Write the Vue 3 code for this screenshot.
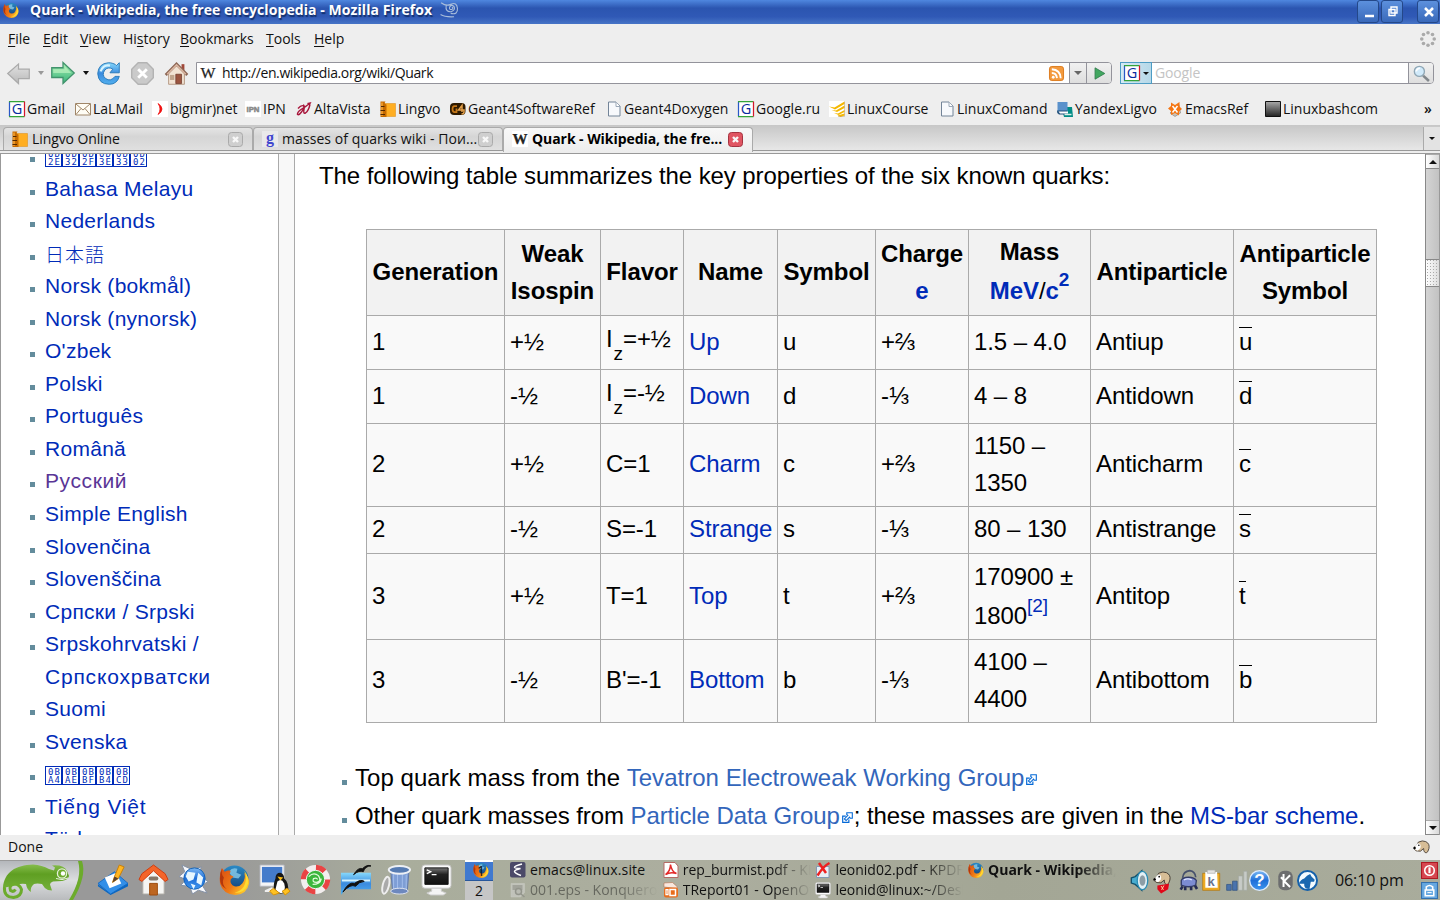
<script setup>
import { h } from 'vue'

const art = {
  firefox: `<circle cx="16" cy="16" r="14.5" fill="url(#sea)"/><path d="M10 8q4-5 9-3l-1 4 5 2-3 4-6-1z" fill="#8fd0ee" opacity=".75"/><path d="M3 4 6 8q3-2 6-1l-1 4 4 2-3 3q-1 5 4 7 5 1 8-3 4-5 2-11 6 5 5 11-2 11-14 12Q4 31 1 20 0 11 3 4z" fill="url(#fox)"/><path d="M26 7q5 6 4 13-3 10-14 10 9-3 11-10 2-7-1-13z" fill="#ffdc32"/><path d="M3 5q-1 6 2 9-3 7 3 12Q1 23 1 15q0-6 2-10z" fill="#b3370c"/>`,
  google: `<path d="M1 1h30v30H1z" fill="#fff"/><path d="M1 31V1" stroke="#2857c7" stroke-width="2.5"/><path d="M0 1h31M0 31h31" stroke="#35a43a" stroke-width="2.5"/><path d="M31 1v30" stroke="#d3182c" stroke-width="2.5"/><text x="16" y="26.500" text-anchor="middle" font-family="Open Sans" font-size="29" fill="#0a2ca0">G</text>`,
  gsmall: `<path d="M0 0h32v32H0z" fill="#e9e9ea"/><text x="16" y="23" text-anchor="middle" font-family="Liberation Serif" font-weight="bold" font-size="32" fill="#4146ce">g</text>`,
  wiki: `<path d="M0 0h32v32H0z" fill="#fff"/><text x="1" y="26" font-family="Liberation Serif" font-size="30" fill="#222" stroke="#222" stroke-width=".5" textLength="30" lengthAdjust="spacingAndGlyphs">W</text>`,
  mail: `<path d="M1 5h30v23H1z" fill="#fffdf5" stroke="#a08668" stroke-width="2"/><path d="m2 6 14 12L30 6M2 27l10-12m18 12L20 15" fill="none" stroke="#a08668" stroke-width="2"/>`,
  bigmir: `<path d="M0 0h32v32H0z" fill="#fff"/><path d="M12 5q8 5 8 11t-8 11q4-5 4-11t-4-11z" fill="#f01010" stroke="#f01010" stroke-width="1.5"/>`,
  ipn: `<path d="M0 0h32v32H0z" fill="#fff"/><text x="3" y="21" font-family="Liberation Sans" font-weight="bold" font-size="15" fill="#888" stroke="#888" textLength="26" lengthAdjust="spacingAndGlyphs">iPN</text>`,
  altavista: `<path d="M4 15q7-8 11-5 3 3-4 12-5 7-8 5-1-4 7-10 11-7 16-11m-12 2q4 1 2 9-2 9 3 7 6-4 9-17" fill="none" stroke="#a8163b" stroke-width="2.8"/><path d="m22 4 9-2-4 8" fill="#a8163b"/>`,
  book: `<path d="M7 5h24v26H7z" fill="#ffae22" stroke="#dd8a10"/><path d="M1 1h10q-4 4 2 6v25H1z" fill="#c66b00"/><path d="M4 3v27" stroke="#f6a636" stroke-width="3"/><path d="M2 11h7M1 19h9M1 27h9" stroke="#522800" stroke-width="2"/>`,
  geant: `<rect y="4" width="31" height="24" rx="8" fill="#2e1a00"/><path d="M14 10H9q-4 0-4 6t4 6h4v-7" fill="none" stroke="#c57718" stroke-width="3.5"/><path d="M24 22V9l-7 9h11v4q0 4-5 4" fill="none" stroke="#e3a04a" stroke-width="3"/>`,
  page: `<path d="M5 2h15l8 8v20H5z" fill="#f7f9fc" stroke="#738498" stroke-width="2"/><path d="M20 2v9h8" fill="#fff" stroke="#9aa7b7" stroke-width="2"/>`,
  fan: `<path d="M0 0h32v32H0z" fill="#fff"/><path d="m0 11 11 2L31 1v5L12 17zm5 7 9 1L31 9v5l-15 8zm5 6 8 1 13-7v4l-12 6zm7 5 14-4v4l-8 3z" fill="#f5b800"/><path d="M31 1v30H18" stroke="#b39764" fill="none"/>`,
  books: `<path d="M9 12h21l2 20H14z" fill="#008b84"/><path d="M1 2h20v20H1z" fill="#5a91cb"/><path d="M0 19h20v8H4q-5-3-4-8z" fill="#22517c"/><path d="M3 21h19v4H6z" fill="#fff"/><path d="M15 27h14" stroke="#d8efe8" stroke-width="3"/>`,
  emacsref: `<path d="M24 7 27 24 16 31 6 24z" fill="#c9c3b9" stroke="#706b65"/><path d="m8 3 8 5 9-6v9l5 5-6 5v8l-8-5-8 4v-8l-6-5 6-5z" fill="#f57613"/><path d="m11 10 10 13m0-13L11 23" stroke="#fff" stroke-width="3"/>`,
  black: `<path d="M1 1h30v30H1z" fill="url(#slate)" stroke="#111" stroke-width="2"/>`,
  back: `<path d="M1 16 16 3v7h15v13H16v7z" fill="url(#greyg)" stroke="#aaa" stroke-width="1.7"/>`,
  forward: `<path d="M31 16 16 2v7H1v13h15v8z" fill="url(#greeng)" stroke="#41936c" stroke-width="1.7"/><path d="m18 7 9 9H3v-5h15z" fill="#c7f7c6" opacity=".6"/>`,
  reload: `<path d="M22 2q4 1 5 3l4-4v14H18l4-5Q16 6 11 11q-5 7 1 12 7 5 13-3h6q-3 11-14 11Q2 31 1 16 2 2 16 1q3 0 6 1z" fill="url(#blueg)" stroke="#2879b8" stroke-width="1.3"/><path d="M5 13Q9 3 18 5" fill="none" stroke="#d6f4ff" stroke-width="3"/>`,
  stop: `<path d="m10 1h12l9 9v12l-9 9H10l-9-9V10z" fill="#cacaca" stroke="#b3b3b3" stroke-width="2"/><path d="m10 10 12 12m0-12L10 22" stroke="#fff" stroke-width="4"/>`,
  home: `<path d="M23 3h4v9h-4z" fill="#a1493a"/><path d="m5 15 11-12 11 12v16H5z" fill="#f2e3d3" stroke="#a28067"/><path d="M1 18 16 3l15 15" fill="none" stroke="#8b6553" stroke-width="4"/><path d="M3 17 16 4l13 13" fill="none" stroke="#dcb7a2" stroke-width="2"/><path d="M15 17h8v13h-8z" fill="#9b5540" stroke="#6d3627"/><path d="M7 18h6v7H7z" fill="#c0a58c"/>`,
  rss: `<rect x="1" y="1" width="30" height="30" rx="5" fill="#f39a3e" stroke="#dc7a1a" stroke-width="2"/><circle cx="9" cy="24" r="3" fill="#fff"/><path d="M6 15q10 0 11 11M6 7q18 1 19 19" fill="none" stroke="#fff" stroke-width="4"/>`,
  go: `<path d="M5 2 29 16 5 30z" fill="#42a760" stroke="#2d7a4a" stroke-width="2"/>`,
  search: `<path d="m19 20 11 10" stroke="#82878b" stroke-width="5"/><circle cx="12" cy="12" r="9.5" fill="#d1eafa" stroke="#8fa6b4" stroke-width="2.5"/><path d="M6 12q1-6 7-6" stroke="#fff" stroke-width="3" fill="none"/>`,
  throbber: `<g fill="#aaa"><circle cx="16" cy="3.5" r="3.6"/><circle cx="25" cy="7" r="3.6"/><circle cx="28.5" cy="16" r="3.6"/><circle cx="25" cy="25" r="3.6"/><circle cx="16" cy="28.5" r="3.6"/><circle cx="7" cy="25" r="3.6"/><circle cx="3.5" cy="16" r="3.6"/><circle cx="7" cy="7" r="3.6"/></g>`,
  swirl: `<path d="M2 3q9 7 17 3Q30 1 31 13t-12 9M11 8q-2 12 9 11 8-3 5-9-5-5-8 1-1 5 4 4 4-3 0-4M1 24q8 5 24 4" fill="none" stroke="#a8bddb" stroke-width="2"/>`,
  ext: `<path d="M11 12H2v18h18v-8" fill="#fff" stroke="#0569d6" stroke-width="3.4"/><path d="M14 2h16v16h-6l-2-3-10 10-5-5L17 10l-3-2z" fill="#fff" stroke="#0569d6" stroke-width="3.2"/>`,
  note: `<path d="m1 20 17-12 14 12-18 11z" fill="#328fe8" stroke="#176bc5"/><path d="m1 21 13 10 18-11v3L14 32 1 23z" fill="#0867c4"/><path d="m8 14 12-5 5 11-12 5z" fill="#fff"/><path d="m16 19 2-6 5-12 5 2-6 12z" fill="#ffb522" stroke="#c77f08"/><path d="m16 19 2-6 4 2z" fill="#5a4130"/>`,
  house: `<path d="M5 15 16 4l11 11v16H5z" fill="#f5f5f3" stroke="#b0aca6"/><path d="M1 16 4 10 16 1l12 9 3 6-3 2L16 7 4 18z" fill="#f4652a" stroke="#ce3c0e"/><path d="M12 20h8v12h-8z" fill="#bd6621" stroke="#9d4a0c"/><rect x="11" y="13" width="10" height="4" rx="2" fill="#88786a"/>`,
  konq: `<g fill="#f7f8fb" stroke="#8390a4"><path d="M4 1 15 6l9-3-2 9 9 6-6 4 5 8-9-3-6 4-3-8-9-1 5-6-7-3 6-5z"/></g><circle cx="17" cy="15" r="11" fill="url(#globe)" stroke="#1562b5"/><path d="m10 8 8 1-2 7-5 2-3-5zm11 1 5 5-2 8-5-3 1-6zM13 20l5 2-2 4z" fill="#e7f7ff"/>`,
  linux: `<path d="M1 1h25v22H1z" fill="#f4f5f7" stroke="#b0b3b9"/><path d="M3 3h21v16H3z" fill="#447bcb"/><path d="m6 27 7-3 6 3-4 2H6z" fill="#eee"/><path d="M17 15q0-6 5-6 4 1 4 6 5 4 4 14-8 3-14 0-2-7 1-14z" fill="#161616"/><path d="M19 18q4-4 7 2 2 7-2 10-4 0-7-4z" fill="#fff"/><path d="m19 13 6 1-3 3z" fill="#ffbf16"/><path d="m15 25 6 5-6 2-4-4zm14 0 3 3-5 4-3-4z" fill="#ffc222" stroke="#d69103"/>`,
  ring: `<circle cx="16" cy="16" r="15" fill="#f2eeee"/><circle cx="16" cy="16" r="12.2" fill="none" stroke="#e94444" stroke-width="6" stroke-dasharray="9.6 9.6"/><circle cx="16" cy="16" r="9.5" fill="#3cb63c" stroke="#f5f5f5"/><path d="M9 13q5-5 10-1 4 6-2 7-5 0-3-4 4-1 4 1m4-1q-1 6-9 6" stroke="#e3fadb" stroke-width="1.3" fill="none"/>`,
  office: `<path d="M1 9h31v17H6l-5 6z" fill="url(#blueg)"/><path d="M2 17h29" stroke="#d5f3ff" stroke-width="2"/><path d="M3 29q6-11 12-9 7-5 10-2-5 0-9 5-5-3-13 6zM14 11q5-8 9-6 5-5 9-3-6 0-8 6-4-2-10 3z" fill="#111" stroke="#111"/>`,
  trash: `<path d="M10 6h19l-2 23H12z" fill="#7e9ed5" stroke="#6279a6"/><path d="M13 9v19m4-18v19m5-19v19m4-18v17" stroke="#a3beeb"/><ellipse cx="19" cy="6" rx="11" ry="4" fill="#567bb2" stroke="#edf0f5" stroke-width="2"/><ellipse cx="19" cy="28" rx="9" ry="3" fill="#6d88be" stroke="#dfe4ef"/><ellipse cx="5" cy="22" rx="3.2" ry="9" transform="rotate(14 5 22)" fill="#aaa" stroke="#eee" stroke-width="2"/>`,
  terminal: `<rect x="1" y="1" width="30" height="24" rx="3" fill="#fbfbfb" stroke="#c4c4c4"/><path d="M4 4h24v17H4z" fill="url(#ink)" stroke="#111"/><path d="m6 6 4 2-4 2m5 1h5" fill="none" stroke="#fff" stroke-width="1.4"/><path d="M11 25h10v3l5 2-3 2H10l-4-2 5-2z" fill="#f4f4f4" stroke="#ccc"/>`,
  emacs: `<rect width="31" height="31" rx="4" fill="#4b4968"/><path d="M24 4Q8 8 9 11q1 2 12 2-12 3-12 6 0 3 13 8" fill="none" stroke="#fff" stroke-width="3"/>`,
  image: `<path d="M2 3h27v18l-8 9H2z" fill="#ddd" stroke="#eee"/><path d="M5 6h20v10H5z" fill="#999"/><circle cx="17" cy="19" r="6" fill="#ccc" stroke="#777" stroke-width="3"/><path d="m22 24 7 6" stroke="#777" stroke-width="3"/>`,
  pdf: `<path d="M2 1h22l6 7v23H2z" fill="#fff" stroke="#b56a64" stroke-width="2"/><path d="M5 25q10-7 10-20 2 14 12 18Q15 19 5 25z" fill="none" stroke="#e32929" stroke-width="3"/>`,
  impress: `<path d="M2 10V2l17-1 9 8v4z" fill="#f8e8df" stroke="#b2633c"/><rect x="2" y="11" width="28" height="20" rx="4" fill="#e86d1d"/><path d="M10 15H6v10h4z" fill="none" stroke="#fff" stroke-width="2.5"/><path d="M14 15h11v12H14z" fill="none" stroke="#fff" stroke-width="3"/>`,
  kpdf: `<path d="M3 9h25v22H3z" fill="#e8eef5" stroke="#8399b4" stroke-width="2"/><path d="m8 2 14 20M29 2Q17 8 5 27" stroke="#ee2020" stroke-width="5" fill="none"/>`,
  speaker: `<path d="M2 12 8 10 18 1v30L8 22l-6-2z" fill="#48acd0" stroke="#11506c" stroke-width="2"/><ellipse cx="19" cy="16" rx="8" ry="14" fill="#e4f0f5" stroke="#2b8db4" stroke-width="2"/><ellipse cx="19" cy="16" rx="4.5" ry="8" fill="#8c9da6"/>`,
  dog: `<path d="M10 4q8-4 14-1 8 4 6 13-2 8-5 8-5 0-5-8l-6 5q-9 1-12-4-1-5 5-6z" fill="#d7bd96" stroke="#3d352e" stroke-width="1.6"/><path d="M9 6q7 0 5 9l-5 5-7-3 2-5z" fill="#fff"/><circle cx="11" cy="10" r="1.5"/><circle cx="3" cy="15" r="2.300"/>`,
  redpet: `<path d="m5 14 25-4-2 12-15 9-8-9z" fill="#e10719"/><path d="m13 15 5 8m1-9-5 9" stroke="#ffd9a0" stroke-width="2"/>`,
  lock: `<path d="M7 12Q8 2 18 1q8 1 9 10" fill="none" stroke="#46516c" stroke-width="2.5"/><path d="M5 16q2-5 11-5t12 5l-1 7q-11 5-22 0z" fill="#7c8cd2" stroke="#323b67" stroke-width="2"/><path d="m7 25-3 5m7-4v5m9-5v5m6-7 3 5" stroke="#252c54" stroke-width="4"/><path d="M9 15q6-3 12 0" stroke="#dfe6ff" stroke-width="2" fill="none"/>`,
  clip: `<path d="M1 5h26v26H1z" fill="#edaa22" stroke="#ad7411"/><path d="M5 3h18l1 24H5z" fill="#fff"/><path d="M8 0h12v5H8z" fill="#e4e4e4" stroke="#aaa"/><text x="14" y="24" text-anchor="middle" font-family="Liberation Mono" font-weight="bold" font-size="20" fill="#68718b">k</text>`,
  bars: `<path d="M1 22h7v9H1zm9-5h7v14h-7z" fill="#4a73ad" stroke="#284c81"/><path d="M19 9h6v22h-6zm8-7h5v29h-5z" fill="#c7cbc7" stroke="#a4a9a4"/>`,
  help: `<circle cx="16" cy="16" r="15" fill="url(#globe)" stroke="#dfecfc" stroke-width="2"/><text x="16" y="25" text-anchor="middle" font-family="Liberation Sans" font-weight="bold" font-size="26" fill="#fff">?</text>`,
  k: `<rect x="5" y="1" width="22" height="30" rx="9" fill="#6c6d6f"/><path d="M13 6v20m10-18-9 9 9 9M9 11l5 5" stroke="#fff" stroke-width="3" fill="none"/>`,
  wolf: `<circle cx="16" cy="16" r="14.5" fill="#f4fbff" stroke="#1561ab" stroke-width="3"/><path d="M3 21q2-6 8-8 4-5 9-7l2 4 5 5-1 3-5 0-2 11q-9 0-8-8-3 0-8 0z" fill="#1967b0"/>`,
  power: `<path d="M1 1h30v30H1z" fill="#d64750" stroke="#ad1923" stroke-width="2"/><circle cx="16" cy="16" r="9" fill="none" stroke="#fff" stroke-width="3"/><path d="M16 10v11" stroke="#fff" stroke-width="4"/>`,
  secure: `<path d="M1 1h30v30H1z" fill="#65a7df" stroke="#3470ad" stroke-width="2"/><path d="M10 14V9q6-5 12 0v5M8 15h16v11H8z" fill="none" stroke="#fff" stroke-width="3"/><path d="M12 20h8" stroke="#fff" stroke-width="2"/>`,
}

const Icon = (props) =>
  h('svg', { viewBox: '0 0 32 32', width: props.s || 16, height: props.s || 16, 'aria-hidden': true, innerHTML: art[props.n] })
Icon.props = ['n', 's']

const menus = [['F', 'ile', 35], ['E', 'dit', 37], ['V', 'iew', 43], ['Hi', 'story', 57], ['B', 'ookmarks', 86], ['T', 'ools', 48], ['H', 'elp', 40]]

const bookmarks = [
  ['google', 'Gmail', 66], ['mail', 'LaLMail', 77], ['bigmir', 'bigmir)net', 93], ['ipn', 'IPN', 51],
  ['altavista', 'AltaVista', 84], ['book', 'Lingvo', 70], ['geant', 'Geant4SoftwareRef', 156],
  ['page', 'Geant4Doxygen', 132], ['google', 'Google.ru', 91], ['fan', 'LinuxCourse', 110],
  ['page', 'LinuxComand', 118], ['books', 'YandexLigvo', 110], ['emacsref', 'EmacsRef', 98], ['black', 'Linuxbashcom', 159],
]

const tabs = [
  { icon: 'book', text: 'Lingvo Online' },
  { icon: 'gsmall', text: 'masses of quarks wiki - Пои...' },
  { icon: 'wiki', text: 'Quark - Wikipedia, the fre...', active: true },
]

const languages = [
  { codes: ['0D2E', '0D32', '0D2F', '0D3E', '0D33', '0D02'] },
  { text: 'Bahasa Melayu' }, { text: 'Nederlands' }, { text: '日本語', kind: 'cjk' }, { text: 'Norsk (bokmål)' },
  { text: 'Norsk (nynorsk)' }, { text: "O'zbek" }, { text: 'Polski' }, { text: 'Português' }, { text: 'Română' },
  { text: 'Русский', kind: 'visited' }, { text: 'Simple English' }, { text: 'Slovenčina' }, { text: 'Slovenščina' },
  { text: 'Српски / Srpski' }, { text: 'Srpskohrvatski / ', wide: 'Српскохрватски' }, { text: 'Suomi' }, { text: 'Svenska' },
  { codes: ['0BA4', '0BAE', '0BBF', '0BB4', '0BCD'] },
  { wide: 'Tiếng Việt' }, { text: 'Türkçe' },
]

const columnWidths = [138, 96, 83, 94, 98, 93, 122, 143, 143]
const rows = [
  { h: 54, gen: 1, spin: '+½', iz: '+½', name: 'Up', sym: 'u', charge: '+⅔', mass: '1.5 – 4.0', anti: 'Antiup' },
  { h: 54, gen: 1, spin: '-½', iz: '-½', name: 'Down', sym: 'd', charge: '-⅓', mass: '4 – 8', anti: 'Antidown' },
  { h: 83, gen: 2, spin: '+½', flavor: 'C=1', name: 'Charm', sym: 'c', charge: '+⅔', mass: '1150 – 1350', anti: 'Anticharm' },
  { h: 47, gen: 2, spin: '-½', flavor: 'S=-1', name: 'Strange', sym: 's', charge: '-⅓', mass: '80 – 130', anti: 'Antistrange' },
  { h: 86, gen: 3, spin: '+½', flavor: 'T=1', name: 'Top', sym: 't', charge: '+⅔', mass: '170900 ± 1800', cite: '[2]', anti: 'Antitop' },
  { h: 83, gen: 3, spin: '-½', flavor: "B'=-1", name: 'Bottom', sym: 'b', charge: '-⅓', mass: '4100 – 4400', anti: 'Antibottom' },
]

const launchers = ['note', 'house', 'konq', 'firefox', 'linux', 'ring', 'office', 'trash', 'terminal']
const tasks = [
  ['emacs', 'emacs@linux.site', 'short'], ['pdf', 'rep_burmist.pdf - KPDF'], ['kpdf', 'leonid02.pdf - KPDF'], ['firefox', 'Quark - Wikipedia, the free', 'current'],
  ['image', '001.eps - Konqueror', 'dim'], ['impress', 'TReport01 - OpenOffice'], ['terminal', 'leonid@linux:~/Desktop'],
]
const tray = [['speaker', 23], ['dog', 25], ['lock', 24], ['clip', 24], ['bars', 23], ['help', 26], ['k', 22], ['wolf', 24]]
</script>

<template>
  <div class="screen">
    <svg class="defs" width="0" height="0">
      <defs>
        <linearGradient id="sea" x2="0" y2="1"><stop stop-color="#2b8ac6" /><stop offset="1" stop-color="#12386f" /></linearGradient>
        <linearGradient id="fox" x2="1" y2=".6"><stop stop-color="#d84c12" /><stop offset=".6" stop-color="#ef7a16" /><stop offset="1" stop-color="#ffc629" /></linearGradient>
        <linearGradient id="ink" x2="0" y2="1"><stop stop-color="#777" /><stop offset=".4" stop-color="#222" /><stop offset="1" stop-color="#111" /></linearGradient>
        <linearGradient id="slate" x2="0" y2="1"><stop stop-color="#aaa" /><stop offset="1" stop-color="#222" /></linearGradient>
        <linearGradient id="greyg" x2="0" y2="1"><stop stop-color="#e2e2e2" /><stop offset="1" stop-color="#b9b9b9" /></linearGradient>
        <linearGradient id="panelg" x2="0" y2="1"><stop stop-color="#b4b7bb" /><stop offset=".5" stop-color="#dcdee0" /><stop offset="1" stop-color="#b9bbbd" /></linearGradient>
        <linearGradient id="greeng" x2="0" y2="1"><stop stop-color="#a9edb2" /><stop offset="1" stop-color="#37b47a" /></linearGradient>
        <linearGradient id="blueg" x2="0" y2="1"><stop stop-color="#86d8fb" /><stop offset=".5" stop-color="#3b8bdf" /><stop offset="1" stop-color="#52b0ee" /></linearGradient>
        <linearGradient id="globe" x2="0" y2="1"><stop stop-color="#7db9f5" /><stop offset=".5" stop-color="#1f6fd8" /><stop offset="1" stop-color="#3f95ee" /></linearGradient>
        <linearGradient id="skin" x2="0" y2="1"><stop stop-color="#86bd4c" /><stop offset=".35" stop-color="#5f9f22" /><stop offset="1" stop-color="#76b23c" /></linearGradient>
      </defs>
    </svg>

    <header class="title">
      <Icon n="firefox" /><b>Quark - Wikipedia, the free encyclopedia - Mozilla Firefox</b><Icon n="swirl" s="18" />
      <span class="grow"></span>
      <i class="win"><svg width="20" height="20"><path d="M6 14h9" stroke="#fff" stroke-width="2.5" /></svg></i>
      <i class="win"><svg width="20" height="20"><path d="M8 5h6v6H8zM6 7.500h6v6H6z" fill="none" stroke="#fff" stroke-width="1.4" /></svg></i>
      <i class="win last"><svg width="20" height="20"><path d="m6 6 8 8m0-8-8 8" stroke="#fff" stroke-width="2.5" /></svg></i>
    </header>

    <nav class="menu">
      <span v-for="m in menus" :key="m[1]" :style="{ width: m[2] + 'px' }"><template v-if="m[0] === 'Hi'">Hi<u>s</u>tory</template><template v-else><u>{{ m[0] }}</u>{{ m[1] }}</template></span>
      <Icon class="throbber" n="throbber" s="16" />
    </nav>

    <div class="toolbar">
      <Icon n="back" s="23" /><i class="caret pale"></i><Icon n="forward" s="24" /><i class="caret"></i>
      <Icon class="reload" n="reload" s="23" /><Icon class="stop" n="stop" s="23" /><Icon class="home" n="home" s="23" />
      <div class="url">
        <Icon n="wiki" /><span>http://en.wikipedia.org/wiki/Quark</span><Icon n="rss" s="15" />
        <i class="drop"><i class="tri"></i></i><i class="go"><Icon n="go" s="13" /></i>
      </div>
      <div class="find">
        <i class="engine"><Icon n="google" /><i class="tri dark"></i></i><span>Google</span><i class="lens"><Icon n="search" s="17" /></i>
      </div>
    </div>

    <div class="bookmarks">
      <span v-for="b in bookmarks" :key="b[1]" :style="{ width: b[2] + 'px' }"><Icon :n="b[0]" />{{ b[1] }}</span><b>»</b>
    </div>

    <div class="tabs">
      <div v-for="t in tabs" :key="t.text" class="tab" :class="{ active: t.active }">
        <Icon :n="t.icon" /><span>{{ t.text }}</span>
        <svg class="close" width="15" height="15"><rect x=".5" y=".5" width="14" height="14" rx="3" /><path d="m5 5 5 5m0-5-5 5" /></svg>
      </div>
      <i class="list"><i class="tri dark"></i></i>
    </div>

    <main class="page">
      <aside>
        <ul>
          <li v-for="(l, i) in languages" :key="i" :class="[l.kind, { missing: l.codes }]">
            <template v-if="l.codes"><span v-for="c in l.codes" :key="c" class="tofu">{{ c.slice(0, 2) }}<br />{{ c.slice(2) }}</span></template>
            <template v-else>{{ l.text }}<span v-if="l.wide" class="wide">{{ l.wide }}</span></template>
          </li>
        </ul>
      </aside>
      <article>
        <p>The following table summarizes the key properties of the six known quarks:</p>
        <table>
          <colgroup><col v-for="(w, i) in columnWidths" :key="i" :style="{ width: w + 'px' }" /></colgroup>
          <thead>
            <tr>
              <th>Generation</th><th>Weak<br />Isospin</th><th>Flavor</th><th>Name</th><th>Symbol</th><th>Charge<br /><a>e</a></th>
              <th class="tall">Mass<br /><a>MeV</a><span class="slash">/</span><a>c<sup>2</sup></a></th><th>Antiparticle</th><th>Antiparticle<br />Symbol</th>
            </tr>
          </thead>
          <tbody>
            <tr v-for="r in rows" :key="r.name" :style="{ height: r.h + 'px' }">
              <td>{{ r.gen }}</td><td>{{ r.spin }}</td>
              <td v-if="r.iz" class="iz">I<sub>z</sub>={{ r.iz }}</td><td v-else>{{ r.flavor }}</td>
              <td><a>{{ r.name }}</a></td><td>{{ r.sym }}</td><td>{{ r.charge }}</td>
              <td :class="{ tall: r.cite }">{{ r.mass }}<sup v-if="r.cite"><a>{{ r.cite }}</a></sup></td>
              <td>{{ r.anti }}</td><td><span class="bar">{{ r.sym }}</span></td>
            </tr>
          </tbody>
        </table>
        <ul>
          <li class="loose">Top quark mass from the <a class="out">Tevatron Electroweak Working Group</a><Icon class="ext" n="ext" s="11" /></li>
          <li>Other quark masses from <a class="out">Particle Data Group</a><Icon class="ext" n="ext" s="11" />; these masses are given in the <a>MS-bar scheme</a>.</li>
        </ul>
      </article>
      <div class="scroll"><i class="arrow"><i class="tri dark up"></i></i><i class="thumb"></i><span class="grow"></span><i class="arrow"><i class="tri dark"></i></i></div>
    </main>

    <div class="status"><span>Done</span><Icon n="dog" s="17" /></div>

    <footer class="panel">
      <div class="start">
        <svg width="84" height="40" viewBox="0 0 84 40">
          <path d="M0 1h79q4 16-9 39H0z" fill="url(#panelg)" /><path d="M78 1q5 16-9 39h4q14-24 9-39z" fill="#6cab2c" />
          <path d="M3 28C4 12 16 5 33 4.500q9 .5 16 4.500l5 1.500 1-3-3-2q12-1 15 5.500l2 5q-1 4-7 5l-9 .5q-3 1-3 3l2 6-4-.5q-4-2-6-6-5-1-8 0-4 3-3 8-4-2-5-8-5-1-9 1z" fill="url(#skin)" />
          <path d="M4.500 27q-1 10 9 10.500 8-1 8-8-2-6-8-5.500-5 2-3 6.500 3 2 5-1" fill="none" stroke="#6cab2c" stroke-width="3" />
          <circle cx="62" cy="13.500" r="4.600" fill="#6cab2c" stroke="#e4efda" stroke-width="1.300" /><circle cx="63" cy="13.500" r="2.200" fill="#fff" />
          <path d="M56 18.500q6 2.500 12-.5" stroke="#e4efda" fill="none" />
        </svg>
      </div>
      <div class="launch"><Icon v-for="l in launchers" :key="l" :n="l" s="31" /></div>
      <div class="pager"><span class="on"><Icon n="firefox" /><b>1</b></span><span>2</span></div>
      <div class="tasks"><span v-for="t in tasks" :key="t[1]" :class="t[2]"><Icon :n="t[0]" /><em>{{ t[1] }}</em></span></div>
      <div class="tray"><span v-for="t in tray" :key="t[0]" :style="{ width: t[1] + 'px' }"><Icon :n="t[0]" :s="t[0] === 'dog' ? 18 : 21" /><Icon v-if="t[0] === 'dog'" class="pet" n="redpet" s="15" /></span></div>
      <time>06:10 pm</time>
      <div class="session"><Icon n="power" s="17" /><Icon n="secure" s="17" /></div>
    </footer>
  </div>
</template>

<style>
body { margin: 0; overflow: hidden; }
</style>

<style scoped>
.screen { width: 1440px; height: 900px; overflow: hidden; display: flex; flex-direction: column; background: #eee; color: #111; font: 14px/20px "Open Sans", "Noto Sans", sans-serif; white-space: nowrap; }
.screen * { box-sizing: border-box; }
.defs { position: absolute; }
i, em { font-style: normal; }
svg { display: block; flex: none; overflow: visible; }
.grow { flex: 1; }
.tri { width: 0; height: 0; border: 4px solid transparent; border-top: 4px solid #666; border-bottom: 0; }
.tri.dark { border-top-color: #111; }
.tri.up { transform: rotate(180deg); }

.title { height: 24px; flex: none; display: flex; align-items: center; padding: 0 1px 4px 3px; background: linear-gradient(#4f87df, #2b55b0 34%, #3059b6 70%, #4674c6); color: #fff; }
.title b { margin-left: 11px; width: 410px; text-shadow: 1px 2px 1px #14306c; letter-spacing: .08px; }
.win { width: 22px; height: 23px; margin: 3px 2px 0 0; padding: 1px; border: 1px solid #244889; border-radius: 3px; background: linear-gradient(#5c90dd, #3969ba); }
.win.last { margin: 3px 0 0 12px; }

.menu { height: 30px; flex: none; display: flex; align-items: center; padding-left: 8px; }
.menu u { text-underline-offset: 2px; }
.throbber { margin-left: auto; margin-right: 4px; }

.toolbar { height: 38px; flex: none; display: flex; align-items: center; padding-left: 7px; }
.caret { width: 0; border: 3px solid transparent; border-top: 4px solid #111; border-bottom: 0; margin: 0 8px; }
.caret.pale { border-top-color: #999; margin: 0 7px 0 8px; }
.stop { margin-left: 11px; }
.home { margin-left: 11px; }
.url { width: 916px; height: 22px; margin-left: 8px; border: 1px solid #93939b; border-radius: 0 4px 4px 0; background: #fff; display: flex; align-items: center; padding-left: 3px; }
.url span { flex: 1; margin-left: 6px; letter-spacing: -.38px; }
.drop, .go, .lens { height: 20px; background: linear-gradient(#f1f1f1, #dedede); border-left: 1px solid #93939b; border-radius: 0 3px 3px 0; display: flex; align-items: center; justify-content: center; }
.drop { width: 17px; margin-left: 5px; border-radius: 0; }
.go { width: 25px; }
.find { width: 314px; height: 22px; margin-left: 8px; border: 1px solid #93939b; border-radius: 0 4px 4px 0; background: #fff; display: flex; }
.find span { flex: 1; margin-left: 3px; color: #c4c4c4; letter-spacing: -.15px; }
.engine { width: 32px; height: 22px; margin: -1px 0 -1px -1px; display: flex; align-items: center; gap: 3px; padding-left: 3px; background: linear-gradient(90deg, #d5eaf4, #b6d8e8); border: 1px solid #4d9cc4; }
.engine .tri { border-width: 3px 3px 0; }
.lens { width: 25px; }

.bookmarks { height: 33px; flex: none; display: flex; align-items: center; padding: 0 0 0 9px; }
.bookmarks span { display: flex; align-items: center; gap: 2px; flex: none; }
.bookmarks b { font-weight: 600; }

.tabs { height: 29px; flex: none; display: flex; padding: 2px 0 0 3px; background: linear-gradient(#c7c7c7, #e7e7e7 25px, #999 25px, #999 26px, #ededed 26px, #ededed 28px, #999 28px); }
.tab { width: 250px; height: 23px; padding: 0 9px 0 8px; border: 1px solid #aaa; border-bottom: 0; border-radius: 4px 4px 0 0; background: linear-gradient(#e4e4e4, #d5d5d5 40%, #e0e0e0); display: flex; align-items: center; }
.tab span { flex: 1; margin-left: 4px; letter-spacing: .08px; }
.tab:nth-child(1) span { letter-spacing: -.1px; }
.tab.active { height: 25px; padding-bottom: 2px; background: linear-gradient(#f8f8f8, #ededed); font-weight: bold; color: #000; }
.tab.active span { letter-spacing: -.06px; }
.close { stroke: #f8f8f8; stroke-width: 2.4; fill: none; }
.close rect { fill: #cfcfcf; stroke: #aaa; stroke-width: 1; }
.active .close rect { fill: #e05562; stroke: #a43340; }
.list { margin-left: auto; width: 17px; height: 23px; border-left: 1px solid #aaa; display: flex; align-items: center; justify-content: center; background: #e3e3e3; }
.list .tri { border-width: 3px 3px 0; }

.page { height: 681px; flex: none; display: flex; overflow: hidden; background: #fff; color: #000; font-family: "Liberation Sans", "Noto Sans CJK JP", sans-serif; border-left: 1px solid #999; }
ul { list-style: none; margin: 0; padding: 0; }
a { color: #002bb8; }
aside { width: 294px; flex: none; border-right: 1px solid #aaa; background: linear-gradient(90deg, #fff 277px, #aaa 277px, #aaa 278px, #f8f8f8 278px); }
aside ul { margin-top: -14px; padding-left: 44px; width: 260px; font-size: 21px; line-height: 32.55px; letter-spacing: .28px; }
li { position: relative; }
aside li { color: #002bb8; white-space: normal; min-height: 32.55px; }
aside li.visited { color: #5a3696; letter-spacing: .6px; }
aside li.cjk { height: 32.55px; font: 300 19px/31px "Noto Sans CJK JP"; letter-spacing: 1px; }
.wide { letter-spacing: .8px; }
li::before { content: ""; position: absolute; width: 5px; height: 5px; left: -15px; top: 17px; background: #638c9c; }
.missing { display: flex; align-items: center; height: 32.55px; }
.tofu { width: 17px; height: 19px; margin-top: 2px; border: 1px solid #002bb8; font: 9px/8px "DejaVu Sans Mono", monospace; letter-spacing: 1px; padding: 1px 0 0 2px; }

article { flex: 1; min-width: 0; font-size: 24px; line-height: 37px; letter-spacing: -.09px; }
p { margin: 3px 0 0 24px; }
table { margin: 35px 0 0 71px; width: 1011px; border-collapse: collapse; table-layout: fixed; background: #f9f9f9; }
th, td { border: 1px solid #aaa; padding: 0 4px 3px 5px; line-height: 37px; text-align: left; vertical-align: middle; white-space: normal; }
th { height: 86px; padding: 0 0 2px; text-align: center; background: #f2f2f2; }
td { letter-spacing: -.1px; }
.tall { line-height: 39px; }
td.tall { padding-bottom: 1px; }
th.tall { padding-bottom: 4px; }
.slash { font-weight: normal; }
sup, sub { font-size: 19px; line-height: 0; vertical-align: 12px; }
th sup { vertical-align: 13px; }
sub { vertical-align: -13px; margin-left: 1px; }
td.iz { padding-bottom: 8px; }
.bar { position: relative; }
.bar::before { content: ""; position: absolute; left: 0; right: 0; top: -1px; border-top: 1px solid #000; }
article ul { margin: 36px 0 0 60px; line-height: 38px; letter-spacing: -.08px; }
article li.loose { letter-spacing: .04px; }
article li.loose .out { letter-spacing: .02px; }
article li::before { left: -13px; top: 21px; }
.out { color: #3366bb; }
.ext { display: inline-block; margin: 0 1px 0 2px; vertical-align: 1px; }
.scroll { width: 15px; display: flex; flex-direction: column; background: linear-gradient(90deg, #d4d4d4, #c2c2c2); border-left: 1px solid #888; border-right: 1px solid #999; }
.arrow { height: 15px; display: flex; align-items: center; justify-content: center; background: linear-gradient(90deg, #fff, #d8d8d8); border-bottom: 1px solid #888; border-top: 1px solid #aaa; }
.thumb { height: 28px; margin-top: 90px; border: 1px solid #888; border-width: 1px 0; background: radial-gradient(circle, #aaa 28%, transparent 32%) 0 5px / 3px 3px, linear-gradient(90deg, #fff, #ddd); }

.status { height: 25px; flex: none; display: flex; align-items: center; justify-content: space-between; padding: 0 10px 2px 8px; }
.status svg { margin-top: 4px; }

.panel { height: 40px; flex: none; display: flex; background: linear-gradient(90deg, #999 0, #999 220px, #a9ad9c 400px, #acae9f 700px, #a3a695 1000px, #a9ac9c); }
.start { width: 97px; }
.launch { width: 368px; padding-top: 4px; display: flex; gap: 9.5px; }
.pager { width: 28px; margin-right: 1px; border-top: 2px solid #fff; display: flex; flex-direction: column; text-align: center; background: #c6c6c6; }
.pager span { flex: 1; line-height: 19px; }
.pager .on { background: #4079cf; border-bottom: 1px solid #28579c; position: relative; padding-left: 8px; }
.pager b { position: absolute; left: 12px; top: -1px; font-weight: normal; }
.tasks { width: 625px; padding-left: 16px; display: grid; grid-template-columns: repeat(4, 152.7px); grid-template-rows: 20px 20px; }
.tasks span { display: flex; align-items: center; gap: 4px; overflow: hidden; }
.tasks em { width: 128px; overflow: hidden; mask-image: linear-gradient(90deg, #000 70%, transparent); }
.tasks .short em { mask-image: none; letter-spacing: .15px; }
.tasks .current { font-weight: bold; }
.tasks .dim { opacity: .45; }
.tray { margin-left: 11px; width: 205px; display: flex; align-items: center; }
.tray span { position: relative; flex: none; }
.pet { position: absolute; left: 2px; top: 8px; }
time { width: 86px; font-size: 16px; line-height: 40px; letter-spacing: -.1px; }
.session { display: flex; flex-direction: column; gap: 3px; padding-top: 2px; }
</style>
